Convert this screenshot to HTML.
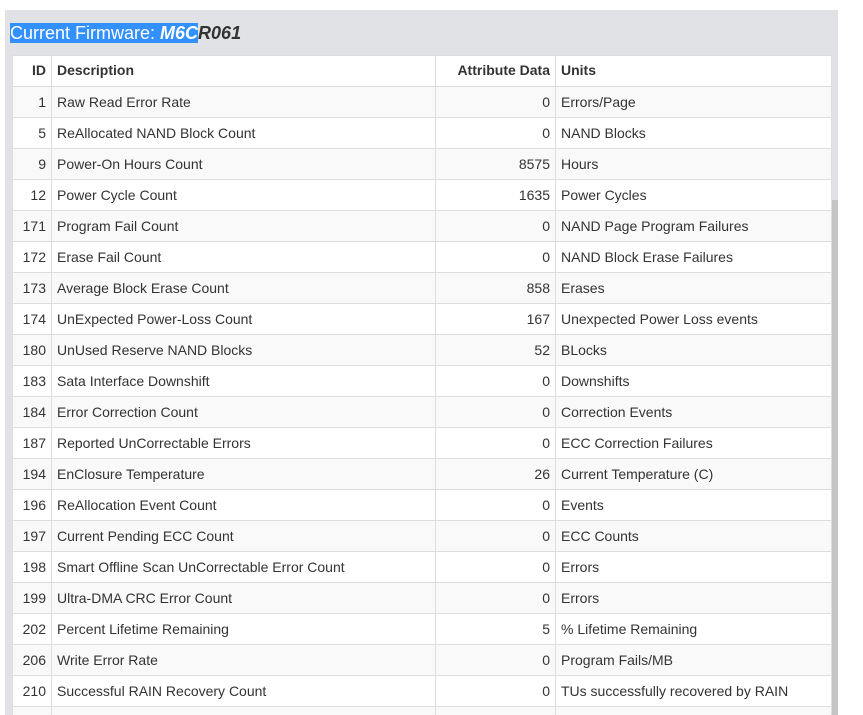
<!DOCTYPE html>
<html><head><style>
html,body{margin:0;background:#fff;font-family:"Liberation Sans",Arial,sans-serif;width:863px;height:715px;overflow:hidden;position:relative}
.panel{position:absolute;left:5px;top:10px;width:833px;height:705px;background:#e1e2e5}
.bar{position:absolute;left:832px;top:200px;width:6px;height:515px;background:#c4c4c6}
h1{position:absolute;left:10px;top:22px;margin:0;font-size:18px;font-weight:normal;color:#333;line-height:22px;white-space:nowrap}
.sel{background:#3390ff;color:#fff}
table{position:absolute;left:12px;top:55px;width:820px;border-collapse:collapse;font-size:14px;color:#333}
td,th{border:1px solid #ddd;height:30px;padding:0 5px;line-height:30px}
th{text-align:left;background:#fff;line-height:28px;padding-bottom:2px;height:28px}
tr:nth-child(odd) td{background:#f9f9f9}
tr:nth-child(even) td{background:#fff}
.r{text-align:right}
</style></head><body>
<div class="panel"></div><div class="bar"></div>
<h1><span class="sel">Current Firmware: <b><i>M6C</i></b></span><b><i>R061</i></b></h1>
<table>
<colgroup><col style="width:39px"><col style="width:384px"><col style="width:120px"><col></colgroup>
<thead><tr><th class="r">ID</th><th>Description</th><th class="r">Attribute Data</th><th>Units</th></tr></thead>
<tbody>
<tr><td class="r">1</td><td>Raw Read Error Rate</td><td class="r">0</td><td>Errors/Page</td></tr>
<tr><td class="r">5</td><td>ReAllocated NAND Block Count</td><td class="r">0</td><td>NAND Blocks</td></tr>
<tr><td class="r">9</td><td>Power-On Hours Count</td><td class="r">8575</td><td>Hours</td></tr>
<tr><td class="r">12</td><td>Power Cycle Count</td><td class="r">1635</td><td>Power Cycles</td></tr>
<tr><td class="r">171</td><td>Program Fail Count</td><td class="r">0</td><td>NAND Page Program Failures</td></tr>
<tr><td class="r">172</td><td>Erase Fail Count</td><td class="r">0</td><td>NAND Block Erase Failures</td></tr>
<tr><td class="r">173</td><td>Average Block Erase Count</td><td class="r">858</td><td>Erases</td></tr>
<tr><td class="r">174</td><td>UnExpected Power-Loss Count</td><td class="r">167</td><td>Unexpected Power Loss events</td></tr>
<tr><td class="r">180</td><td>UnUsed Reserve NAND Blocks</td><td class="r">52</td><td>BLocks</td></tr>
<tr><td class="r">183</td><td>Sata Interface Downshift</td><td class="r">0</td><td>Downshifts</td></tr>
<tr><td class="r">184</td><td>Error Correction Count</td><td class="r">0</td><td>Correction Events</td></tr>
<tr><td class="r">187</td><td>Reported UnCorrectable Errors</td><td class="r">0</td><td>ECC Correction Failures</td></tr>
<tr><td class="r">194</td><td>EnClosure Temperature</td><td class="r">26</td><td>Current Temperature (C)</td></tr>
<tr><td class="r">196</td><td>ReAllocation Event Count</td><td class="r">0</td><td>Events</td></tr>
<tr><td class="r">197</td><td>Current Pending ECC Count</td><td class="r">0</td><td>ECC Counts</td></tr>
<tr><td class="r">198</td><td>Smart Offline Scan UnCorrectable Error Count</td><td class="r">0</td><td>Errors</td></tr>
<tr><td class="r">199</td><td>Ultra-DMA CRC Error Count</td><td class="r">0</td><td>Errors</td></tr>
<tr><td class="r">202</td><td>Percent Lifetime Remaining</td><td class="r">5</td><td>% Lifetime Remaining</td></tr>
<tr><td class="r">206</td><td>Write Error Rate</td><td class="r">0</td><td>Program Fails/MB</td></tr>
<tr><td class="r">210</td><td>Successful RAIN Recovery Count</td><td class="r">0</td><td>TUs successfully recovered by RAIN</td></tr>
<tr><td class="r">&nbsp;</td><td></td><td></td><td></td></tr>
</tbody></table>
</body></html>
